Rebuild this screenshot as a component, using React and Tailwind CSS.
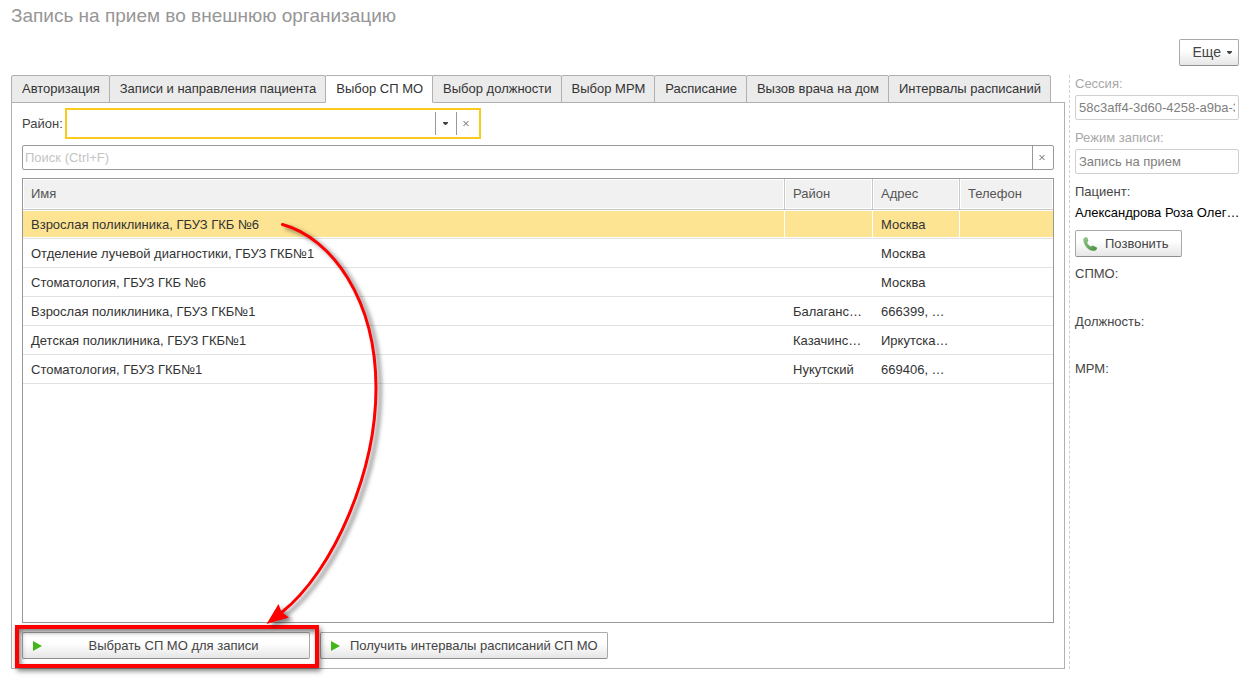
import { useState } from "react";

const tabs = [
  "Авторизация",
  "Записи и направления пациента",
  "Выбор СП МО",
  "Выбор должности",
  "Выбор МРМ",
  "Расписание",
  "Вызов врача на дом",
  "Интервалы расписаний",
];

const clinics = [
  { name: "Взрослая поликлиника, ГБУЗ ГКБ №6", district: "", address: "Москва" },
  { name: "Отделение лучевой диагностики, ГБУЗ ГКБ№1", district: "", address: "Москва" },
  { name: "Стоматология, ГБУЗ ГКБ №6", district: "", address: "Москва" },
  { name: "Взрослая поликлиника, ГБУЗ ГКБ№1", district: "Балаганс…", address: "666399, …" },
  { name: "Детская поликлиника, ГБУЗ ГКБ№1", district: "Казачинс…", address: "Иркутска…" },
  { name: "Стоматология, ГБУЗ ГКБ№1", district: "Нукутский", address: "669406, …" },
];

const buttonClass =
  "flex h-[27px] items-center rounded-xs border border-[#a9a9a9] border-b-[#8f8f8f] bg-linear-to-b from-white from-40% to-[#e6e6e6] text-[#444]";

const Caret = () => (
  <svg className="h-[3px] w-[5px] shrink-0" viewBox="0 0 5 3" aria-hidden="true">
    <path d="M0 0h5v1L3 3H2L0 1z" fill="#444" />
  </svg>
);

const Cross = () => (
  <svg className="h-[5px] w-[6px]" viewBox="0 0 6 5" aria-hidden="true">
    <path d="M.5 0l5 5M5.5 0l-5 5" stroke="#666" />
  </svg>
);

const Play = () => (
  <svg className="h-[10px] w-[9px] shrink-0" viewBox="0 0 9 10" aria-hidden="true">
    <path d="M0 0l9 5-9 5z" fill="#44b718" />
  </svg>
);

const Phone = () => (
  <svg className="h-[14px] w-[14px] shrink-0" viewBox="0 0 14 14" aria-hidden="true">
    <defs>
      <linearGradient id="phone" x1="0" y1="0" x2="1" y2="1">
        <stop offset="0" stopColor="#94c890" />
        <stop offset="1" stopColor="#4a8f3e" />
      </linearGradient>
    </defs>
    <path
      d="M.5 1.500C1.500.300 3.500 0 4.300.600L5.300 3.800C5.300 4.800 4.200 5.200 4.200 5.600C4.600 7.200 6.200 8.900 7.800 9.600C8.600 9.600 9 8.600 9.800 8.600L13.800 10.600C14.300 11.400 13.600 13 12.400 13.500C10.400 14.300 7.200 13.800 4.400 11.200C1.400 8.400-.400 4 .5 1.500z"
      fill="url(#phone)"
    />
  </svg>
);

// Red frame around the button plus the arrow leading to it from the selected row
const Callout = () => (
  <>
    <div className="pointer-events-none absolute -top-[7px] -right-[9px] -bottom-[9px] -left-[7px] border-4 border-[#fe0000] shadow-[2px_3px_5px_rgba(0,0,0,0.5),inset_2px_3px_5px_rgba(0,0,0,0.5)]" />
    <svg
      className="pointer-events-none absolute bottom-full left-[240px] h-[417px] w-[140px] overflow-visible"
      viewBox="262 215 140 417"
      aria-hidden="true"
    >
      <g className="drop-shadow-[4px_3px_2px_rgba(0,0,0,0.5)]">
        <path
          d="M282.500 224.500C332 238 376 300 376 388C376 470 335 570 281 613"
          fill="none"
          stroke="#fe0000"
          strokeWidth="3"
          strokeLinecap="round"
        />
        <path d="M266.500 624L278.500 604L281.500 612L289 617.500z" fill="#fe0000" />
      </g>
    </svg>
  </>
);

const Sidebar = () => (
  <aside className="ml-1 flex w-[170px] shrink-0 flex-col items-stretch border-l border-dashed border-[#d0d0d0] pl-[5px] leading-[18px] text-[#444]">
    <label htmlFor="session" className="text-[#a8a8a8]">Сессия:</label>
    <input
      id="session"
      readOnly
      value="58c3aff4-3d60-4258-a9ba-3019"
      className="mt-0.5 h-[25px] w-full rounded-xs border border-[#d0d0d0] px-[3px] text-[#808080]"
    />
    <label htmlFor="mode" className="mt-[9px] text-[#a8a8a8]">Режим записи:</label>
    <input
      id="mode"
      readOnly
      value="Запись на прием"
      className="mt-0.5 h-[25px] w-full rounded-xs border border-[#d0d0d0] px-[3px] text-[#808080]"
    />
    <p className="mt-[9px]">Пациент:</p>
    <p className="leading-6 whitespace-nowrap text-black">Александрова Роза Олег…</p>
    <button type="button" className={`${buttonClass} mt-[5px] gap-2 self-start pr-3 pl-[7px]`}>
      <Phone />
      Позвонить
    </button>
    <p className="mt-2">СПМО:</p>
    <p className="mt-[30px]">Должность:</p>
    <p className="mt-[29px]">МРМ:</p>
  </aside>
);

const App = () => {
  const [activeTab, setActiveTab] = useState(2);
  const [selected, setSelected] = useState(0);
  const [district, setDistrict] = useState("");
  const [search, setSearch] = useState("");

  return (
    <div className="flex min-h-screen flex-col bg-white pr-[19px] pb-[10px] pl-[11px] font-['Liberation_Sans',Arial,sans-serif] text-[13px] text-[#333]">
      <h1 className="h-[39px] pt-1 text-[19px] leading-6 text-[#969696]">Запись на прием во внешнюю организацию</h1>
      <div className="mb-[9px] flex justify-end">
        <button type="button" className={`${buttonClass} gap-1.5 pr-1.5 pl-[13px] text-[14px]`}>
          Еще
          <Caret />
        </button>
      </div>

      <div className="flex flex-1">
        <main className="flex min-w-0 flex-1 flex-col">
          {/* Tabs */}
          <div role="tablist" className="flex">
            {tabs.map((tab, i) => (
              <button
                key={tab}
                type="button"
                role="tab"
                aria-selected={i === activeTab}
                onClick={() => setActiveTab(i)}
                className={`relative -mr-px h-7 rounded-t-xs border border-[#b0b0b0] pr-[9px] pl-[10px] whitespace-nowrap ${
                  i === activeTab ? "z-10 border-b-white bg-white" : "bg-[#ebebeb]"
                }`}
              >
                {tab}
              </button>
            ))}
          </div>

          <section className="-mt-px flex flex-1 flex-col border border-[#b0b0b0] px-[10px] pt-[5px] pb-[9px]">
            {/* District filter */}
            <div className="flex items-center">
              <label htmlFor="district" className="w-[43px] text-[#444]">Район:</label>
              <div className="flex h-[31px] w-[416px] items-center border-2 border-[#fcca1c]">
                <input
                  id="district"
                  value={district}
                  onChange={(e) => setDistrict(e.target.value)}
                  className="h-full min-w-0 flex-1 px-1 outline-none"
                />
                <button type="button" aria-label="Выбрать" className="flex h-[23px] w-[21px] items-center border-l border-[#999] pl-[7px]">
                  <Caret />
                </button>
                <button
                  type="button"
                  aria-label="Очистить"
                  onClick={() => setDistrict("")}
                  className="flex h-[23px] w-[23px] items-center border-l border-[#999] pl-[6px]"
                >
                  <Cross />
                </button>
              </div>
            </div>

            {/* Search */}
            <div className="mt-[6px] flex h-[25px] rounded-xs border border-[#999]">
              <input
                aria-label="Поиск"
                placeholder="Поиск (Ctrl+F)"
                value={search}
                onChange={(e) => setSearch(e.target.value)}
                className="min-w-0 flex-1 px-0.5 outline-none placeholder:text-[#c4c4c4]"
              />
              <button
                type="button"
                aria-label="Очистить поиск"
                onClick={() => setSearch("")}
                className="flex w-[21px] items-center border-l border-[#999] pl-[6px]"
              >
                <Cross />
              </button>
            </div>

            {/* Clinics */}
            <div className="mt-2 flex-1 border border-[#999]">
              <table className="w-full table-fixed border-separate border-spacing-0 text-left">
                <colgroup>
                  <col />
                  <col className="w-[88px]" />
                  <col className="w-[87px]" />
                  <col className="w-[93px]" />
                </colgroup>
                <thead>
                  <tr className="h-[31px] text-[#555]">
                    {["Имя", "Район", "Адрес", "Телефон"].map((title) => (
                      <th
                        key={title}
                        className="border-r border-b border-[#c8c8c8] bg-[#f1f1f1] px-2 font-normal shadow-[inset_0_0_0_1px_#fff] last:border-r-0"
                      >
                        {title}
                      </th>
                    ))}
                  </tr>
                </thead>
                <tbody>
                  {clinics.map((clinic, i) => (
                    <tr
                      key={clinic.name}
                      onClick={() => setSelected(i)}
                      className={
                        i === selected
                          ? "h-[29px] bg-[#fde492] *:border-r *:border-r-white *:shadow-[inset_0_1px_0_#fff,inset_0_-1px_0_#fff] *:last:border-r-0"
                          : "h-[29px]"
                      }
                    >
                      <td className="truncate border-b border-[#e2e2e2] px-2 pt-0.5">{clinic.name}</td>
                      <td className="border-b border-[#e2e2e2] px-2 pt-0.5 whitespace-nowrap">{clinic.district}</td>
                      <td className="border-b border-[#e2e2e2] px-2 pt-0.5 whitespace-nowrap">{clinic.address}</td>
                      <td className="border-b border-[#e2e2e2] px-2 pt-0.5" />
                    </tr>
                  ))}
                </tbody>
              </table>
            </div>

            {/* Actions */}
            <div className="mt-[9px] flex gap-[10px]">
              <div className="relative">
                <button type="button" className={`${buttonClass} w-[288px] pr-1 pl-[10px]`}>
                  <Play />
                  <span className="flex-1 text-center">Выбрать СП МО для записи</span>
                </button>
                <Callout />
              </div>
              <button type="button" className={`${buttonClass} w-[288px] gap-[10px] pl-[10px]`}>
                <Play />
                Получить интервалы расписаний СП МО
              </button>
            </div>
          </section>
        </main>

        <Sidebar />
      </div>
    </div>
  );
};

export default App;
